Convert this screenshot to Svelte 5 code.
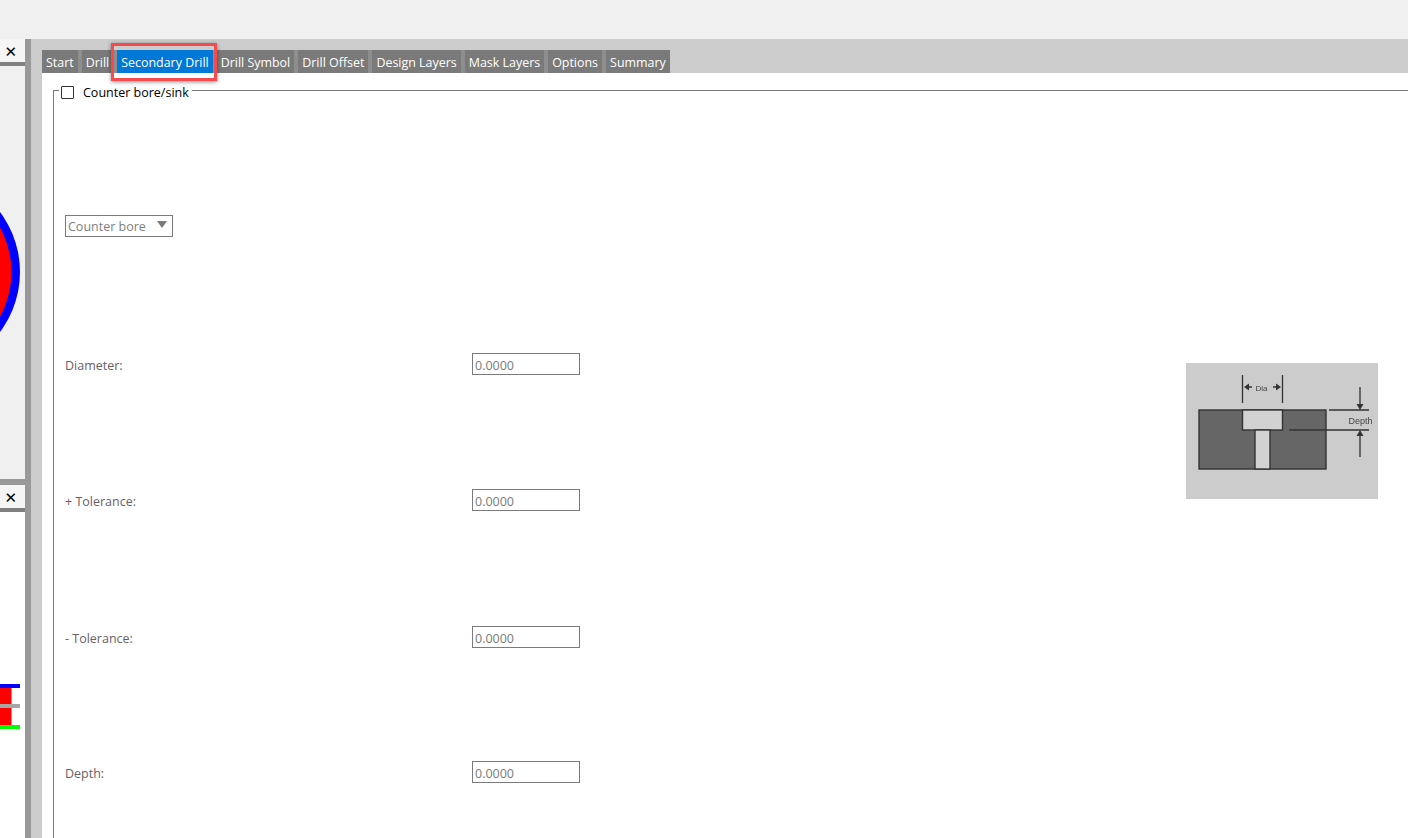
<script>
  const tabs = ['Start', 'Drill', 'Secondary Drill', 'Drill Symbol', 'Drill Offset', 'Design Layers', 'Mask Layers', 'Options', 'Summary'];
  const rows = ['Diameter:', '+ Tolerance:', '- Tolerance:', 'Depth:'];
</script>

<div class="app">
  <div class="topbar"></div>
  <div class="main">
    <aside class="left">
      <section class="pane upper">
        <div class="panehead"><button class="close" aria-label="Close">✕</button></div>
        <svg class="preview" width="25" height="413" viewBox="0 0 25 413">
          <circle cx="-80" cy="206" r="100" fill="#0000ff" />
          <circle cx="-80" cy="206" r="91.5" fill="#ff0000" />
        </svg>
      </section>
      <section class="pane lower">
        <div class="panehead"><button class="close" aria-label="Close">✕</button></div>
        <svg class="preview" width="25" height="326" viewBox="0 0 25 326">
          <rect x="0" y="176" width="11.5" height="41" fill="#ff0000" />
          <rect x="0" y="172" width="20" height="4" fill="#0000ff" />
          <rect x="0" y="192" width="20" height="4" fill="#a6a6a6" />
          <rect x="0" y="213" width="20" height="4" fill="#00ff00" />
        </svg>
      </section>
    </aside>
    <div class="splitter"></div>
    <div class="work">
      <nav class="tabs">
        <div class="strip">
          {#each tabs as tab, i}
            <button class="tab" class:active={i === 2}>{tab}</button>
          {/each}
        </div>
        <span class="mark"></span>
      </nav>
      <div class="content">
        <fieldset class="group">
          <legend><span class="check"></span><span>Counter bore/sink</span></legend>
          <div class="form">
            <div class="selectrow">
              <div class="select"><span>Counter bore</span><i class="caret"></i></div>
            </div>
            {#each rows as row, i}
              <div class="row">
                <label class="label" for="f{i}">{row}</label>
                <input id="f{i}" class="num" value="0.0000" readonly />
              </div>
            {/each}
            <svg class="diagram" width="192" height="136" viewBox="0 0 192 136">
              <rect width="192" height="136" fill="#cccccc" />
              <rect x="13" y="47" width="127" height="59" fill="#666666" stroke="#333" stroke-width="1.4" />
              <rect x="56.500" y="47" width="40" height="20" fill="#d2d2d2" stroke="#333" stroke-width="1.4" />
              <rect x="69" y="67" width="15" height="39" fill="#d2d2d2" stroke="#333" stroke-width="1.4" />
              <g stroke="#333" stroke-width="1.3" fill="none">
                <path d="M56.500 12V40M96.500 12V40" />
                <path d="M60 24H66M87 24H93" />
                <path d="M143 47H183M103 67H183" />
                <path d="M174 24V42M174 72V94" />
              </g>
              <g fill="#333">
                <path d="M58 24L63 20.500V27.500ZM95 24L90 20.500V27.500Z" />
                <path d="M174 47L170.500 41H177.500ZM174 67L170.500 73H177.500Z" />
              </g>
              <text x="75.500" y="28" class="dtext dia" text-anchor="middle">Dia</text>
              <text x="174.500" y="61" class="dtext" text-anchor="middle">Depth</text>
            </svg>
          </div>
        </fieldset>
      </div>
    </div>
  </div>
</div>

<style>
  :global(body) { margin: 0; overflow: hidden; }
  .app {
    width: 1408px;
    height: 838px;
    display: flex;
    flex-direction: column;
    overflow: hidden;
    font-family: "Open Sans", "Noto Sans", sans-serif;
    font-size: 12.5px;
    background: #f0f0f0;
  }
  .topbar { height: 39px; flex: none; background: #f0f0f0; }
  .main { flex: 1; display: flex; min-height: 0; }
  .left { width: 25px; flex: none; display: flex; flex-direction: column; }
  .pane { display: flex; flex-direction: column; overflow: hidden; }
  .upper { height: 440px; background: #f0f0f0; }
  .lower { flex: 1; background: #fff; border-top: 6px solid #999; }
  .panehead {
    height: 23px;
    flex: none;
    background: #f5f5f5;
    border-bottom: 4px solid #808080;
    display: flex;
    justify-content: flex-end;
  }
  .close {
    width: 25px;
    padding: 3px 8px 0 0;
    border: 0;
    background: none;
    color: #000;
    font: 700 15px "DejaVu Sans", sans-serif;
    line-height: 20px;
    text-align: right;
  }
  .preview { display: block; flex: none; }
  .splitter { width: 6px; flex: none; background: #999; }
  .work { flex: 1; min-width: 0; display: flex; flex-direction: column; background: #ccc; }
  .tabs {
    height: 34px;
    flex: none;
    box-sizing: border-box;
    padding: 11px 0 0 11px;
    position: relative;
  }
  .strip {
    display: inline-flex;
    gap: 4px;
    background: #8e8e8e;
  }
  .tab {
    height: 23px;
    padding: 2px 4px 0;
    border: 0;
    background: #7a7a7a;
    color: #fff;
    font: inherit;
    font-size: 12.45px;
    white-space: nowrap;
  }
  .tab.active { background: #0078d7; }
  .mark {
    position: absolute;
    left: 80px;
    top: 4px;
    width: 100px;
    height: 32px;
    border: 3px solid #f44b4f;
    box-shadow: 0 1px 4px rgba(0, 0, 0, 0.45);
    pointer-events: none;
  }
  .content { flex: 1; min-height: 0; margin-left: 11px; background: #fff; padding: 8px 0 0 11px; overflow: hidden; }
  .group {
    margin: 0;
    padding: 0 0 0 11px;
    height: 800px;
    border: 0;
    border-top: 1px solid #7a7a7a;
    border-left: 1px solid #7a7a7a;
    min-width: 0;
    box-sizing: border-box;
  }
  legend {
    padding: 5px 3px 0 2px;
    margin: 0 0 0 -6px;
    display: flex;
    align-items: center;
    height: 13px;
    color: #000;
    gap: 9px;
    background: #fff;
    width: max-content;
    box-sizing: content-box;
  }
  .check {
    width: 11px;
    height: 11px;
    border: 1px solid #333;
    border-radius: 1px;
    display: block;
  }
  .form {
    position: relative;
    display: grid;
    grid-template-columns: 407px 108px 1fr;
    grid-template-rows: 255px 136px 137px 135px 136px;
  }
  .selectrow { grid-column: 1 / -1; }
  .select {
    margin-top: 116px;
    width: 104px;
    height: 20px;
    border: 1px solid #7a7a7a;
    color: #808080;
    display: flex;
    align-items: center;
    justify-content: space-between;
    padding-left: 2px;
    line-height: 18px;
  }
  .select span { position: relative; top: 1px; }
  .caret {
    margin-right: 5px;
    margin-top: -3px;
    border-left: 5px solid transparent;
    border-right: 5px solid transparent;
    border-top: 7px solid #7a7a7a;
  }
  .row { display: contents; }
  .label { color: #6a6064; grid-column: 1; padding-top: 3px; line-height: 17px; }
  .num {
    grid-column: 2;
    width: 108px;
    height: 22px;
    margin-top: -1px;
    box-sizing: border-box;
    border: 1px solid #7a7a7a;
    padding: 3px 2px 0;
    font: inherit;
    color: #7a7a7a;
    background: #fff;
    outline: none;
    align-self: start;
  }
  .diagram { position: absolute; left: 1121px; top: 264px; filter: blur(0.3px); }
  .dtext { font-family: "Liberation Sans", sans-serif; font-size: 9px; fill: #444; }
  .dia { font-size: 8px; }
</style>
